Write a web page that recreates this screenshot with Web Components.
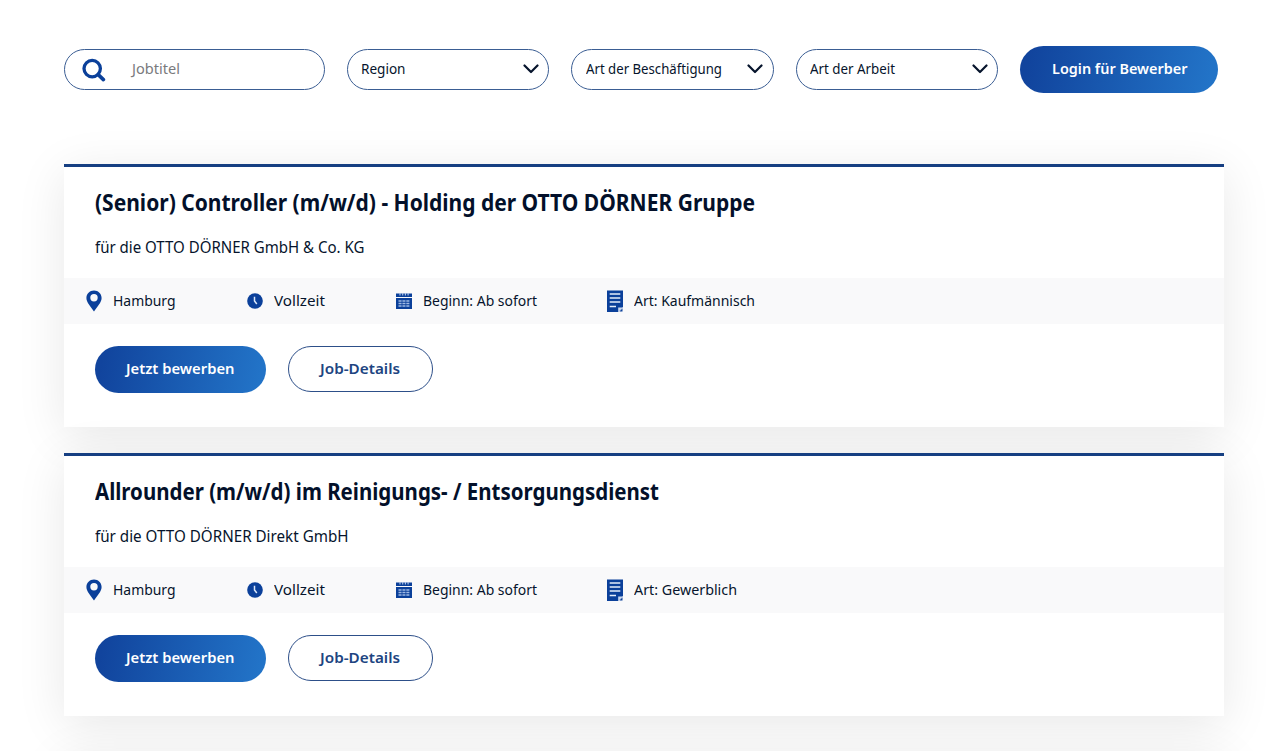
<!DOCTYPE html>
<html lang="de">
<head>
<meta charset="utf-8">
<title>Stellenangebote</title>
<style>
html,body{margin:0;background:#fff;overflow:hidden}
body{font-family:"Noto Sans","Open Sans",sans-serif;color:#06142c}
</style>
</head>
<body>
<job-board></job-board>
<script>
const define = (name, html, setup) => customElements.define(name, class extends HTMLElement {
  connectedCallback() {
    if (this.shadowRoot) return;
    const t = document.createElement('template');
    t.innerHTML = html;
    this.attachShadow({mode: 'open'}).append(t.content.cloneNode(true));
    if (setup) setup(this, this.shadowRoot);
  }
});

/* Single line of text condensed to a fixed width. */
define('fit-text', `<style>
:host{display:block;flex:none;white-space:nowrap;line-height:1.4}
span{display:inline-block;transform-origin:0 50%}
</style><span><slot></slot></span>`, (el, root) => {
  const w = +el.getAttribute('w'), s = root.querySelector('span');
  el.style.width = w + 'px';
  const fit = () => {
    s.style.transform = 'none';
    const real = s.getBoundingClientRect().width;
    if (real) s.style.transform = `scaleX(${w / real})`;
  };
  fit();
  requestAnimationFrame(fit);
});

const icons = {
  search: '<svg width="24" height="24" viewBox="0 0 24 24" fill="none" stroke="#0b409a"><circle cx="10.2" cy="10.6" r="8.2" stroke-width="3.3"/><path d="M16.2 16.6L21.4 21.6" stroke-width="3.6" stroke-linecap="round"/></svg>',
  pin: '<svg width="16" height="22" viewBox="0 0 16 22"><path fill="#0b409a" fill-rule="evenodd" d="M8 .5C3.7.5.4 3.800.4 7.900.4 12.500 4.800 16.200 8 21.600 11.200 16.200 15.600 12.500 15.600 7.900 15.600 3.800 12.300.5 8 .5ZM8 4.100a3.700 3.700 0 1 1 0 7.400a3.700 3.700 0 0 1 0-7.400Z"/></svg>',
  clock: '<svg width="16" height="16" viewBox="0 0 16 16"><circle cx="8" cy="8" r="7.800" fill="#0b409a"/><path d="M7.500 3.800V8L9.800 11" fill="none" stroke="#dce8fa" stroke-width="1.500"/></svg>',
  calendar: '<svg width="16" height="16" viewBox="0 0 16 16"><path fill="#0b409a" d="M0 .6H16V4H0ZM0 5H16V16H0Z"/><path d="M4 0V2.600M6.700 0V2.600M9.400 0V2.600M12.100 0V2.600" stroke="#b7caea" stroke-width="1.100"/><path d="M2.500 8H13.500M2.500 10.500H13.500M2.500 13H13.500" stroke="#9fb9e4" stroke-width="1.600" stroke-dasharray="3.100 .8"/></svg>',
  sheet: '<svg width="16" height="22" viewBox="0 0 16 22"><path fill="#0b409a" d="M0 .5H16V17L11 22H0Z"/><path d="M2.700 4H13.300M2.700 8H13.300M2.700 12H13.300M2.700 16.500H9" stroke="#e4edfa" stroke-width="1.300"/><path d="M11.200 22V17.500H16Z" fill="#c9d8f0"/><path d="M12.400 21.400L15.500 18.300V21.400Z" fill="#0b409a"/></svg>'
};
define('app-icon', `<style>:host{display:block;flex:none}svg{display:block}</style>`, (el, root) => {
  root.innerHTML += icons[el.getAttribute('name')];
});

define('search-field', `<style>
:host{display:flex;align-items:center;box-sizing:border-box;width:261.500px;height:40.500px;border:1.300px solid #3a5d93;border-radius:21px;padding:0 0 0 17.500px;gap:26px;color:#7a7a7d;font-size:13.500px;background:#fff}
</style><app-icon name="search"></app-icon><slot></slot>`);

define('filter-select', `<style>
:host{display:flex;align-items:center;justify-content:space-between;box-sizing:border-box;width:202.300px;height:40.500px;border:1.300px solid #3a5d93;border-radius:21px;padding:0 9.500px 1px 13.300px;font-size:14px;background:#fff}
svg{display:block}
</style><slot></slot><svg width="16" height="10" viewBox="0 0 16 10"><path d="M1.500 1.500L8 8L14.500 1.500" fill="none" stroke="#06142c" stroke-width="2.200" stroke-linecap="round" stroke-linejoin="round"/></svg>`);

define('pill-button', `<style>
:host{display:flex;align-items:center;justify-content:center;box-sizing:border-box;height:47px;width:171px;border-radius:24px;padding-bottom:3px;font-size:15px;font-weight:600;color:#fff;background:linear-gradient(100deg,#11449d 5%,#2273c7 95%)}
:host([wide]){width:198px}
:host([outline]){width:145.500px;height:46px;padding-bottom:2px;background:#fff;color:#204481;border:1.300px solid #2d4f89}
</style><slot></slot>`);

define('job-meta', `<style>
:host{display:flex;align-items:center;font-size:15px;height:100%}
div{width:27.200px;flex:none}
</style><div><app-icon></app-icon></div><slot></slot>`, (el, root) => {
  const icon = document.createElement('app-icon');
  icon.setAttribute('name', el.getAttribute('icon'));
  root.querySelector('app-icon').replaceWith(icon);
});

define('job-card', `<style>
:host{display:flex;flex-direction:column;box-sizing:border-box;height:263px;border-top:3.500px solid #163f82;background:#fff;box-shadow:0 9px 46px rgba(0,0,0,.095)}
.title{height:32px;display:flex;align-items:center;margin:20px 0 0 31px;font-size:22.600px;font-weight:700;color:#03102a}
.firm{height:24px;display:flex;align-items:center;margin:16.500px 0 0 31px;font-size:15.500px}
.meta{height:45.500px;margin-top:18.500px;padding-left:22px;display:grid;grid-template-columns:161px 149.300px 211.500px 200px;align-items:center;background:#f9f9fa}
.actions{display:flex;gap:22px;padding:22.500px 0 0 31px}
</style>
<div class="title"><slot name="title"></slot></div>
<div class="firm"><slot name="firm"></slot></div>
<div class="meta"><slot name="meta"></slot></div>
<div class="actions"><pill-button><fit-text w="108.500">Jetzt bewerben</fit-text></pill-button><pill-button outline><fit-text w="80">Job-Details</fit-text></pill-button></div>`);

define('job-board', `<style>
:host{display:block;box-sizing:border-box;height:751px;overflow:hidden;padding:45.500px 56.500px 0 63.500px}
nav{display:flex;align-items:center;gap:22.100px;height:48px}
main{display:flex;flex-direction:column;gap:26px;margin-top:70.500px}
.next{height:263px;margin-top:11px;box-shadow:0 9px 46px rgba(0,0,0,.095)}
</style>
<nav>
<search-field><fit-text w="48">Jobtitel</fit-text></search-field>
<filter-select><fit-text w="44.500">Region</fit-text></filter-select>
<filter-select><fit-text w="136">Art der Beschäftigung</fit-text></filter-select>
<filter-select><fit-text w="85">Art der Arbeit</fit-text></filter-select>
<pill-button wide><fit-text w="135.500">Login für Bewerber</fit-text></pill-button>
</nav>
<main>
<job-card>
<fit-text slot="title" w="660">(Senior) Controller (m/w/d) - Holding der OTTO DÖRNER Gruppe</fit-text>
<fit-text slot="firm" w="269.500">für die OTTO DÖRNER GmbH &amp; Co. KG</fit-text>
<job-meta slot="meta" icon="pin"><fit-text w="62.500">Hamburg</fit-text></job-meta>
<job-meta slot="meta" icon="clock"><fit-text w="51">Vollzeit</fit-text></job-meta>
<job-meta slot="meta" icon="calendar"><fit-text w="114">Beginn: Ab sofort</fit-text></job-meta>
<job-meta slot="meta" icon="sheet"><fit-text w="121">Art: Kaufmännisch</fit-text></job-meta>
</job-card>
<job-card>
<fit-text slot="title" w="564">Allrounder (m/w/d) im Reinigungs- / Entsorgungsdienst</fit-text>
<fit-text slot="firm" w="253.500">für die OTTO DÖRNER Direkt GmbH</fit-text>
<job-meta slot="meta" icon="pin"><fit-text w="62.500">Hamburg</fit-text></job-meta>
<job-meta slot="meta" icon="clock"><fit-text w="51">Vollzeit</fit-text></job-meta>
<job-meta slot="meta" icon="calendar"><fit-text w="114">Beginn: Ab sofort</fit-text></job-meta>
<job-meta slot="meta" icon="sheet"><fit-text w="103">Art: Gewerblich</fit-text></job-meta>
</job-card>
<div class="next"></div>
</main>`);
</script>
</body>
</html>
